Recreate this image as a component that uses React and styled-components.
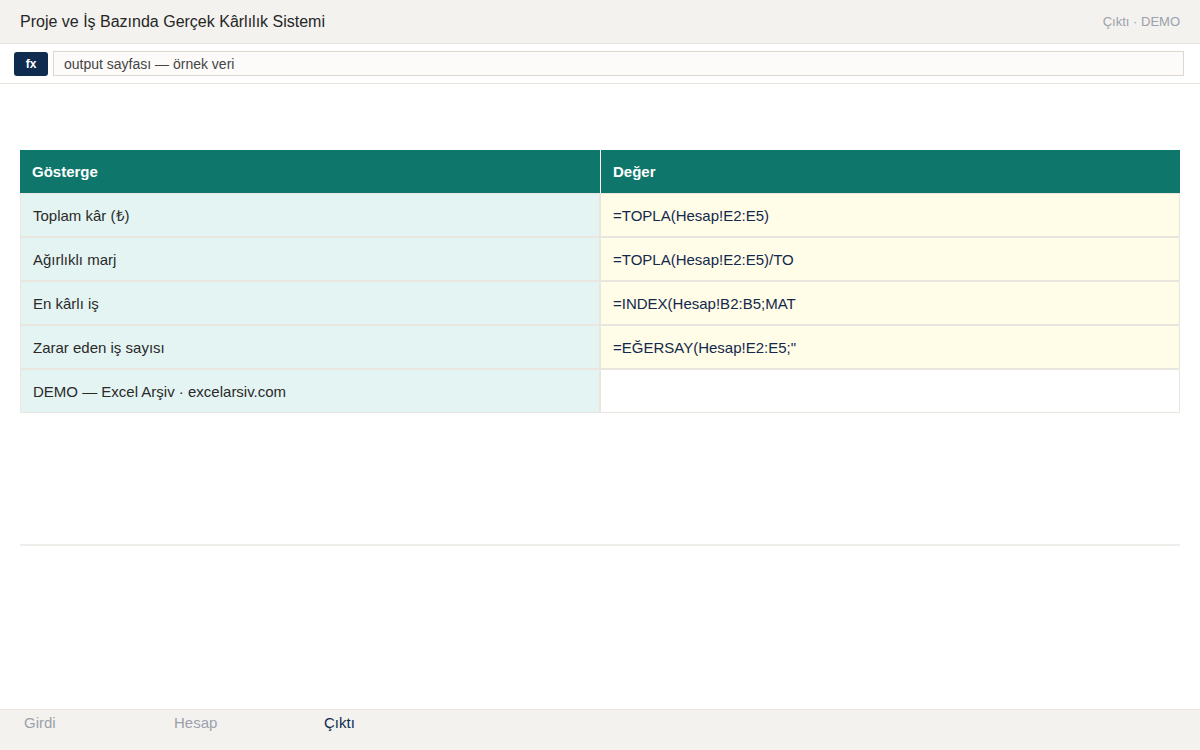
import styled, { createGlobalStyle } from "styled-components";

const GlobalStyle = createGlobalStyle`
  html, body {
    margin: 0;
    padding: 0;
    height: 100%;
  }
  body {
    font-family: "Liberation Sans", Arial, sans-serif;
    background: #ffffff;
    color: #222;
  }
  #root {
    height: 100%;
  }
`;

const Page = styled.div`
  height: 100vh;
  display: flex;
  flex-direction: column;
`;

const Header = styled.header`
  height: 44px;
  box-sizing: border-box;
  padding: 0 20px;
  display: flex;
  align-items: center;
  justify-content: space-between;
  background: #f3f2ee;
  border-bottom: 1px solid #e7e4dd;
`;

const Title = styled.h1`
  margin: 0;
  font-size: 16px;
  font-weight: 400;
  color: #262626;
`;

const Meta = styled.span`
  font-size: 13px;
  color: #9ba1ad;
`;

const FormulaBar = styled.div`
  height: 40px;
  box-sizing: border-box;
  padding: 0 16px 0 14px;
  display: flex;
  align-items: center;
  gap: 5px;
  border-bottom: 1px solid #e7e4dd;
`;

const FxButton = styled.div`
  width: 34px;
  height: 24px;
  border-radius: 3px;
  background: #0f2b50;
  color: #fff;
  font-size: 12px;
  font-weight: 700;
  display: flex;
  align-items: center;
  justify-content: center;
`;

const FormulaInput = styled.div`
  flex: 1;
  height: 25px;
  box-sizing: border-box;
  padding: 0 10px;
  display: flex;
  align-items: center;
  background: #fcfbf9;
  border: 1px solid #ddd8cf;
  font-size: 14px;
  color: #454545;
`;

const Main = styled.main`
  flex: 1;
  padding: 66px 20px 0;
`;

const Table = styled.table`
  width: 100%;
  border-collapse: separate;
  border-spacing: 0;
  font-size: 15px;
`;

const HeadCell = styled.th`
  height: 43px;
  padding: 0 12px;
  text-align: left;
  font-weight: 600;
  color: #fff;
  background: #0f766b;
  width: 50%;

  & + & {
    border-left: 1px solid #ffffff;
  }
`;

const Cell = styled.td`
  height: 42px;
  padding: 0 12px;
  border: 1px solid #e9e6e0;
  background: ${(p) =>
    p.$kind === "label" ? "#e4f4f2" : p.$kind === "value" ? "#fffce8" : "#ffffff"};
  color: ${(p) => (p.$kind === "value" ? "#13294b" : "#2a2a2a")};
`;

const Divider = styled.hr`
  margin: 131px 0 0;
  border: 0;
  border-top: 2px solid #efede9;
`;

const TabBar = styled.nav`
  height: 41px;
  box-sizing: border-box;
  display: flex;
  background: #f3f2ee;
  border-top: 1px solid #e9e5de;
`;

const Tab = styled.div`
  width: 150px;
  box-sizing: border-box;
  padding: 4px 24px 0;
  font-size: 15px;
  color: ${(p) => (p.$active ? "#0f2b50" : "#9ba1ad")};
`;

const rows = [
  ["Toplam kâr (₺)", "=TOPLA(Hesap!E2:E5)"],
  ["Ağırlıklı marj", "=TOPLA(Hesap!E2:E5)/TO"],
  ["En kârlı iş", "=INDEX(Hesap!B2:B5;MAT"],
  ["Zarar eden iş sayısı", "=EĞERSAY(Hesap!E2:E5;\""],
  ["DEMO — Excel Arşiv · excelarsiv.com", null],
];

const tabs = ["Girdi", "Hesap", "Çıktı"];

export default function App() {
  return (
    <>
      <GlobalStyle />
      <Page>
        <Header>
          <Title>Proje ve İş Bazında Gerçek Kârlılık Sistemi</Title>
          <Meta>Çıktı · DEMO</Meta>
        </Header>
        <FormulaBar>
          <FxButton>fx</FxButton>
          <FormulaInput>output sayfası — örnek veri</FormulaInput>
        </FormulaBar>
        <Main>
          <Table>
            <thead>
              <tr>
                <HeadCell>Gösterge</HeadCell>
                <HeadCell>Değer</HeadCell>
              </tr>
            </thead>
            <tbody>
              {rows.map(([label, value]) => (
                <tr key={label}>
                  <Cell $kind="label">{label}</Cell>
                  <Cell $kind={value ? "value" : "empty"}>{value}</Cell>
                </tr>
              ))}
            </tbody>
          </Table>
          <Divider />
        </Main>
        <TabBar>
          {tabs.map((t) => (
            <Tab key={t} $active={t === "Çıktı"}>
              {t}
            </Tab>
          ))}
        </TabBar>
      </Page>
    </>
  );
}
